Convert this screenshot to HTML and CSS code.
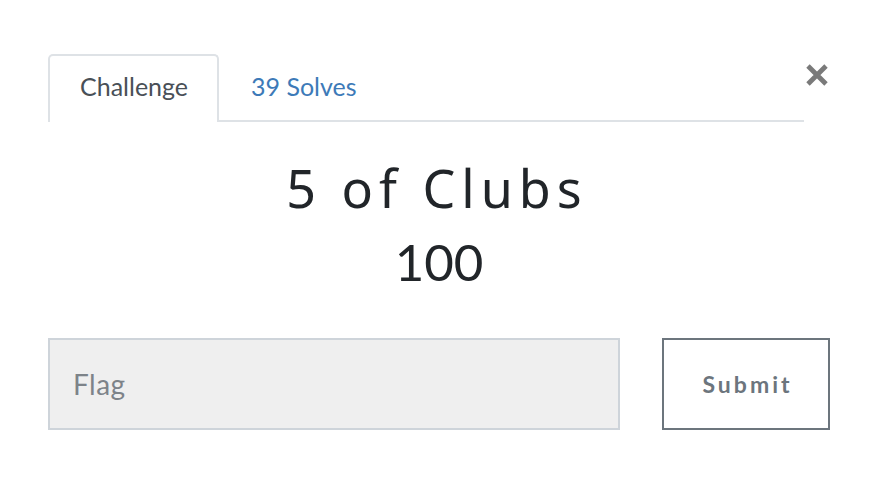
FILE: index.html
```html
<!DOCTYPE html>
<html>
<head>
<meta charset="utf-8">
<link rel="stylesheet" href="styles.css">
</head>
<body>
<div class="modal">
  <div class="header">
    <ul class="tabs">
      <li class="tab active">Challenge</li>
      <li class="tab link">39 Solves</li>
    </ul>
    <button class="close" aria-label="Close">
      <svg width="24" height="24" viewBox="0 0 24 24"><path d="M3 3 L21 21 M21 3 L3 21" stroke="#7a7a7a" stroke-width="4.8" stroke-linecap="butt"/></svg>
    </button>
  </div>
  <div class="info">
    <h2 class="title">5 of Clubs</h2>
    <h3 class="value">100</h3>
  </div>
  <form class="flag-row">
    <input class="flag" type="text" placeholder="Flag">
    <button class="submit" type="button">Submit</button>
  </form>
</div>
</body>
</html>
```
FILE: styles.css
```css
* { box-sizing: border-box; }
html, body { margin: 0; padding: 0; background: #fff; }
body { font-family: Lato, "Open Sans", sans-serif; width: 882px; height: 496px; overflow: hidden; }

.modal { padding: 54px 52px 0 48px; }

.header { display: flex; align-items: flex-start; }
.tabs {
  list-style: none; margin: 0; padding: 0;
  display: flex; flex: 1;
  border-bottom: 2px solid #dee2e6;
  height: 68px;
}
.tab {
  font-size: 25px; line-height: 30px;
  padding: 15px 28px 17px 30px;
  height: 66px;
}
.tab.active {
  color: #495057;
  border: 2px solid #dee2e6; border-bottom: none;
  border-radius: 5px 5px 0 0;
  background: #fff;
  margin-bottom: -2px; height: 68px;
  width: 171px;
}
.tab.link { color: #3d7ab8; padding-left: 32px; padding-top: 17px; }

.close {
  border: 0; background: none; padding: 0; margin: 9px 0 0 0;
  width: 26px; height: 24px; display: flex; justify-content: center;
}

.info { text-align: center; margin-top: 36px; }
.title {
  margin: 0; font-weight: 400; font-size: 52px; line-height: 60px;
  letter-spacing: 6px; color: #212529;
  font-family: "Noto Sans", Lato, sans-serif;
  padding-right: 4px;
}
.value {
  margin: 14px 0 0; font-weight: 400; font-size: 51px; line-height: 60px;
  color: #212529;
}

.flag-row { display: flex; margin-top: 46px; gap: 42px; }
.flag {
  width: 572px; height: 92px;
  background: #efefef; border: 2px solid #ced4da;
  font-family: Lato, sans-serif; font-size: 28px; letter-spacing: 0.5px; color: #495057;
  padding: 0 23px; outline: none;
}
.flag::placeholder { color: #7d8389; }
.submit {
  width: 168px; height: 92px;
  background: #fff; border: 2px solid #6c757d;
  font-family: Lato, sans-serif; font-weight: 700; font-size: 23px;
  letter-spacing: 3px; color: #6c757d; padding: 0 0 0 3px;
}
```
